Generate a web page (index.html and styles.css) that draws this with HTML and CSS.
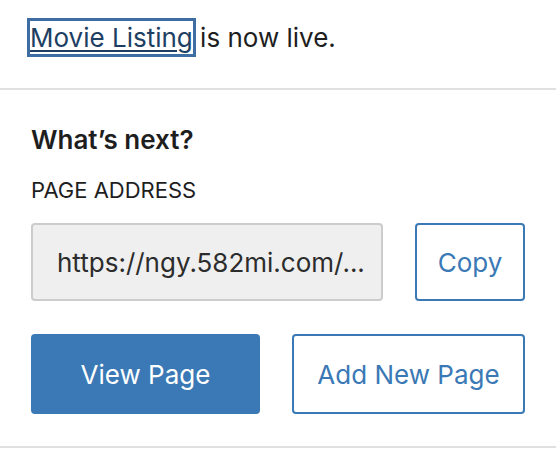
FILE: index.html
```html
<!DOCTYPE html>
<html lang="en">
<head>
<meta charset="utf-8">
<title>Post publish panel</title>
<link rel="stylesheet" href="styles.css">
</head>
<body>
<div class="panel">
  <div class="header">
    <a class="post-link" href="#">Movie Listing</a> is now live.
  </div>
  <div class="section">
    <h2 class="title">What’s next?</h2>
    <div class="label">PAGE ADDRESS</div>
    <div class="row address-row">
      <div class="address">https://ngy.582mi.com/...</div>
      <button class="btn btn-secondary copy">Copy</button>
    </div>
    <div class="row actions">
      <button class="btn btn-primary">View Page</button>
      <button class="btn btn-secondary">Add New Page</button>
    </div>
  </div>
</div>
</body>
</html>
```

FILE: styles.css
```css
* {
  box-sizing: border-box;
}

html, body {
  margin: 0;
  padding: 0;
  background: #ffffff;
}

body {
  font-family: Inter, "Noto Sans", "Liberation Sans", sans-serif;
  color: #1e1e1e;
  font-size: 26px;
}

.panel {
  width: 556px;
}

.header {
  padding: 20px 31px 32px 30px;
  line-height: 36px;
  border-bottom: 2px solid #e0e0e0;
}

.post-link {
  color: #1e3f63;
  text-decoration: underline;
  text-decoration-thickness: 2px;
  text-underline-offset: 3px;
  padding: 1px 0;
  box-shadow: 0 0 0 3px #3d6da3;
}

.section {
  padding: 32px 31px 32px;
  border-bottom: 2px solid #e0e0e0;
}

.title {
  margin: 0 0 17px;
  font-size: 26px;
  font-weight: 600;
  line-height: 36px;
}

.label {
  font-size: 22px;
  line-height: 30px;
  margin-bottom: 18px;
}

.row {
  display: flex;
  gap: 32px;
}

.address-row {
  height: 78px;
  margin-bottom: 33px;
}

.address {
  flex: 1;
  display: flex;
  align-items: center;
  padding: 0 24px;
  background: #efefef;
  border: 2px solid #cccccc;
  border-radius: 4px;
  color: #2c2c2c;
  white-space: nowrap;
  overflow: hidden;
}

.btn {
  font-family: inherit;
  font-size: 26px;
  border-radius: 4px;
  cursor: pointer;
  height: 100%;
}

.copy {
  width: 110px;
}

.actions {
  height: 80px;
}

.actions .btn {
  flex: 1;
}

.btn-primary {
  background: #3a79b5;
  color: #ffffff;
  border: 0;
}

.btn-secondary {
  background: #ffffff;
  color: #3a79b5;
  border: 2px solid #3a79b5;
}
```
